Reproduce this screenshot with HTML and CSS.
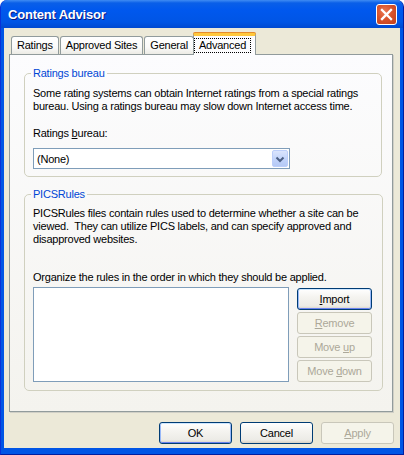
FILE: index.html
```html
<!DOCTYPE html>
<html lang="en">
<head>
<meta charset="UTF-8">
<title>Content Advisor</title>
<link rel="stylesheet" href="styles.css">
</head>
<body>
    <!-- Fenetre principale -->
    <div class="window">
        <div class="titlebar">
            <span class="title">Content Advisor</span>
            <span class="close">
                <svg width="19" height="19" viewBox="0 0 19 19">
                    <path d="M5 5 L14 14 M14 5 L5 14" stroke="#fff" stroke-width="2.3" stroke-linecap="square"/>
                </svg>
            </span>
        </div>

        <div class="client">
            <!-- Onglets -->
            <div class="tabs">
                <span class="tab">Ratings</span>
                <span class="tab">Approved Sites</span>
                <span class="tab">General</span>
                <span class="tab active"><span class="focus">Advanced</span></span>
            </div>

            <div class="panel">
                <fieldset class="group first">
                    <legend>Ratings bureau</legend>
                    <p class="text">Some rating systems can obtain Internet ratings from a special ratings<br>bureau. Using a ratings bureau may slow down Internet access time.</p>
                    <p class="label">Ratings <u>b</u>ureau:</p>
                    <div class="combo">
                        <span class="value">(None)</span>
                        <span class="drop">
                            <svg width="14" height="16" viewBox="0 0 14 16">
                                <path d="M3.5 6.5 L7 10 L10.5 6.5" fill="none" stroke="#4d6185" stroke-width="2"/>
                            </svg>
                        </span>
                    </div>
                </fieldset>

                <fieldset class="group second">
                    <legend>PICSRules</legend>
                    <p class="text">PICSRules files contain rules used to determine whether a site can be<br>viewed.&nbsp; They can utilize PICS labels, and can specify approved and<br>disapproved websites.</p>
                    <p class="organize">Organize the rules in the order in which they should be applied.</p>
                    <div class="rules">
                        <div class="listbox"></div>
                        <div class="side">
                            <button class="btn side-btn default"><u>I</u>mport</button>
                            <button class="btn side-btn" disabled><u>R</u>emove</button>
                            <button class="btn side-btn" disabled>Move <u>u</u>p</button>
                            <button class="btn side-btn" disabled>Move <u>d</u>own</button>
                        </div>
                    </div>
                </fieldset>
            </div>

            <!-- Boutons du bas -->
            <div class="footer">
                <button class="btn foot-btn default">OK</button>
                <button class="btn foot-btn">Cancel</button>
                <button class="btn foot-btn" disabled><u>A</u>pply</button>
            </div>
        </div>
    </div>
</body>
</html>
```

FILE: styles.css
```css
/* Styles généraux */
body {
    margin: 0;
    padding: 0;
    background: #fff;
    font-family: "Liberation Sans", Arial, sans-serif;
    font-size: 11px;
    letter-spacing: -0.22px;
    color: #000;
}

/* Cadre de la fenetre */
.window {
    width: 404px;
    height: 455px;
    box-sizing: border-box;
    background: #0055e5;
    border-radius: 7px 7px 0 0;
    border-left: 1px solid #0831d9;
    border-right: 1px solid #001ea0;
    border-bottom: 1px solid #001ea0;
    padding: 0 3px 6px;
    display: flex;
    flex-direction: column;
}

.titlebar {
    height: 30px;
    margin: 0 -3px;
    padding: 0 6px 0 7px;
    display: flex;
    align-items: center;
    justify-content: space-between;
    border-radius: 7px 7px 0 0;
    background: linear-gradient(to bottom, #3f8cf3 0px, #0a5fe8 3px, #0058ee 10px, #0055e5 22px, #0049d0 28px, #0043c0 30px);
}
.title {
    color: #fff;
    font-weight: bold;
    font-size: 13px;
    letter-spacing: -0.2px;
    text-shadow: 1px 1px 0 #0a1883;
    margin-top: 1px;
}
.close {
    width: 19px;
    height: 19px;
    border: 1px solid #fff;
    border-radius: 3px;
    background: radial-gradient(circle at 40% 35%, #ec7a55 0%, #d9542c 45%, #c13e1c 100%);
    display: flex;
    margin-top: 1px;
}

.client {
    flex: 1;
    background: #ece9d8;
    padding: 5px 6px 4px 5px;
    display: flex;
    flex-direction: column;
}

/* Onglets */
.tabs {
    display: flex;
    align-items: flex-end;
    height: 21px;
    padding-left: 2px;
    position: relative;
    z-index: 1;
}
.tab {
    height: 17px;
    line-height: 17px;
    padding: 0 5px;
    border: 1px solid #919b9c;
    border-bottom: none;
    border-radius: 3px 3px 0 0;
    background: linear-gradient(to bottom, #fff, #fafaf9 60%, #ecebe5);
    margin-right: 1px;
}
.tab.active {
    height: 19px;
    line-height: 19px;
    margin: 0 -2px -1px -2px;
    padding: 0 5px 0 1px;
    background: #fcfcfe;
    border-top: 3px solid #ffc83c;
    box-shadow: 0 -1px 0 #e68b2c;
    border-radius: 2px 2px 0 0;
}
.focus {
    outline: 1px dotted #000;
    padding: 0 4px;
    line-height: 13px;
    display: inline-block;
}

/* Page de l'onglet */
.panel {
    height: 356px;
    border: 1px solid #919b9c;
    background: linear-gradient(to bottom, #fcfcfe, #f4f3ee);
    box-shadow: 1px 1px 0 #d0cfc6;
    margin-right: 1px;
}

/* Cadres de groupe */
.group {
    margin: 12px 10px 0 14px;
    padding: 7px 10px 7px 8px;
    border: 1px solid #d0d0bf;
    border-radius: 5px;
}
.group.second {
    margin-top: 11px;
    padding-top: 6px;
    padding-bottom: 8px;
}
.group legend {
    color: #0046d5;
    padding: 0 2px;
    margin-left: -2px;
    line-height: 13px;
}
.text {
    margin: 0;
    line-height: 13px;
    white-space: nowrap;
}
.label {
    margin: 14px 0 0;
    line-height: 13px;
}
.organize {
    margin: 25px 0 0;
    line-height: 13px;
}

/* Liste deroulante */
.combo {
    margin-top: 8px;
    width: 257px;
    height: 21px;
    box-sizing: border-box;
    border: 1px solid #7f9db9;
    background: #fff;
    display: flex;
    align-items: center;
    justify-content: space-between;
    padding: 1px;
}
.combo .value {
    padding-left: 2px;
}
.drop {
    width: 16px;
    height: 17px;
    box-sizing: border-box;
    border: 1px solid #bccefa;
    border-radius: 2px;
    background: linear-gradient(to bottom, #dbe5fd, #c4d5fb 50%, #b5c9f5);
    display: flex;
    align-items: center;
    justify-content: center;
}

.rules {
    margin-top: 3px;
    display: flex;
    gap: 8px;
}
.listbox {
    width: 256px;
    height: 95px;
    box-sizing: border-box;
    border: 1px solid #7f9db9;
    background: #fff;
}
.side {
    display: flex;
    flex-direction: column;
    gap: 2px;
    padding-top: 1px;
}

/* Boutons */
.btn {
    font-family: "Liberation Sans", Arial, sans-serif;
    font-size: 11px;
    letter-spacing: -0.22px;
    color: #000;
    height: 22px;
    padding: 0;
    border: 1px solid #003c74;
    border-radius: 3px;
    background: linear-gradient(to bottom, #fff, #f5f4f0 40%, #ecebe6 85%, #d6d0c5);
}
.btn.default {
    box-shadow: inset 0 1px 0 #cee7ff, inset 1px 0 0 #98b8f8, inset -1px 0 0 #98b8f8, inset 0 -1px 0 #6982ee;
}
.btn:disabled {
    color: #aca899;
    border-color: #c9c7ba;
    background: #f5f4ea;
    box-shadow: none;
}
.side-btn {
    width: 75px;
}
.foot-btn {
    width: 73px;
}

.footer {
    margin-top: 10px;
    display: flex;
    justify-content: flex-end;
    gap: 8px;
}
```
